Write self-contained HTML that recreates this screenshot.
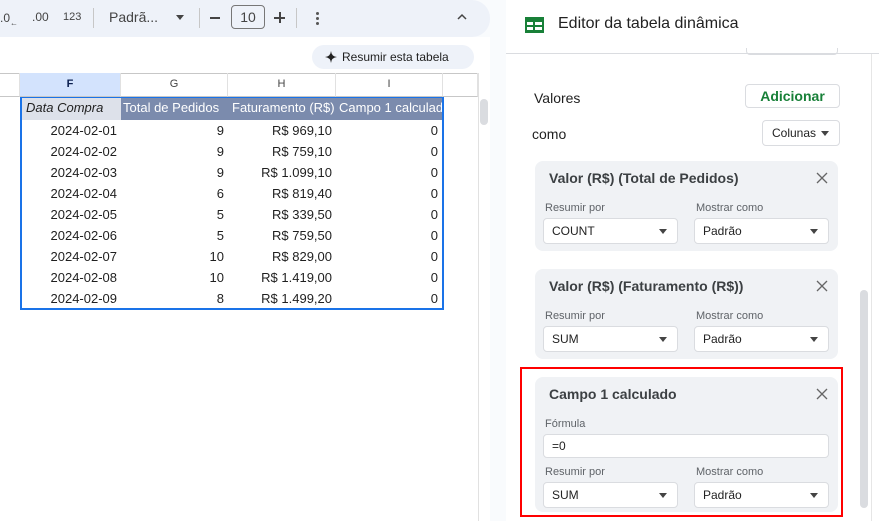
<!DOCTYPE html>
<html><head><meta charset="utf-8"><style>
*{box-sizing:border-box;margin:0;padding:0}
body{width:879px;height:521px;overflow:hidden;background:#f9fbfd;font-family:"Liberation Sans",Arial,sans-serif;position:relative;color:#1f1f1f}
.a{position:absolute}
.tb{left:0;top:0;width:490px;height:37px;background:#eef2f9;border-radius:0 18px 18px 0}
.grid{left:0;top:37px;width:490px;height:484px;background:#fff}
.hdr{top:73px;height:24px;border-bottom:1px solid #c7c7c7;border-right:1px solid #e1e1e1;font-size:11px;color:#444;text-align:center;line-height:23px}
.cell{font-size:13px;height:21px;line-height:21px;padding:0 4px;white-space:nowrap;overflow:hidden}
.r{text-align:right}
.th{background:#7b8bad;color:#fff}
.panel{left:506px;top:0;width:373px;height:521px;background:#fff}
.card{background:#f0f2f5;border-radius:8px;left:535px;width:303px}
.lbl{font-size:11px;color:#5f6368}
.sel{background:#fff;border:1px solid #dadce0;border-radius:4px;height:26px;font-size:12px;line-height:24px;padding-left:8px;color:#222}
.sel:after{content:"";position:absolute;right:10px;top:10px;border:4px solid transparent;border-top:5px solid #444}
.nf:after{display:none}
.t{font-size:14px;font-weight:bold;color:#3c4043}
.dots{width:3px}
.dots i{display:block;width:3px;height:3px;border-radius:50%;background:#555;margin-bottom:2px}
</style></head><body>
<div class="a tb"></div>
<div class="a" style="left:0;top:11px;font-size:12px;color:#444">.0<sub style="font-size:8px">←</sub></div>
<div class="a" style="left:32px;top:10px;font-size:12px;color:#444">.00</div>
<div class="a" style="left:63px;top:11px;font-size:11px;color:#444">123</div>
<div class="a" style="left:93px;top:8px;width:1px;height:20px;background:#c7c7c7"></div>
<div class="a" style="left:109px;top:9px;font-size:14px;color:#444">Padrã...</div>
<div class="a" style="left:176px;top:15px;border:4px solid transparent;border-top:5px solid #444"></div>
<div class="a" style="left:199px;top:8px;width:1px;height:20px;background:#c7c7c7"></div>
<div class="a" style="left:210px;top:17px;width:10px;height:1.5px;background:#444"></div>
<div class="a" style="left:231px;top:5px;width:34px;height:24px;border:1px solid #777;border-radius:4px;font-size:14px;text-align:center;line-height:22px;color:#444">10</div>
<div class="a" style="left:274px;top:17px;width:11px;height:1.5px;background:#444"></div>
<div class="a" style="left:279px;top:12px;width:1.5px;height:11px;background:#444"></div>
<div class="a" style="left:296px;top:8px;width:1px;height:20px;background:#c7c7c7"></div>
<div class="a dots" style="left:316px;top:12px"><i></i><i></i><i></i></div>
<svg class="a" style="left:456px;top:13px" width="12" height="8"><path d="M2 6 L6 2 L10 6" fill="none" stroke="#444" stroke-width="1.5"/></svg>
<div class="a grid"></div>
<div class="a" style="left:312px;top:45px;width:162px;height:24px;background:#eef2f9;border-radius:12px;font-size:12px;line-height:24px;padding-left:30px">Resumir esta tabela</div>
<svg class="a" style="left:324px;top:50px" width="14" height="14"><path d="M7 1 Q7.5 6.5 13 7 Q7.5 7.5 7 13 Q6.5 7.5 1 7 Q6.5 6.5 7 1Z" fill="#222"/></svg>
<div class="a" style="left:0;top:73px;width:478px;height:1px;background:#c7c7c7"></div>
<div class="a hdr" style="left:0;width:20px"></div>
<div class="a hdr" style="left:20px;width:101px;background:#d3e3fd;font-weight:bold;color:#0b1f4f">F</div>
<div class="a hdr" style="left:121px;width:107px">G</div>
<div class="a hdr" style="left:228px;width:108px">H</div>
<div class="a hdr" style="left:336px;width:107px">I</div>
<div class="a hdr" style="left:443px;width:35px"></div>
<div class="a" style="left:478px;top:73px;width:1px;height:448px;background:#e1e1e1"></div>
<div class="a" style="left:480px;top:99px;width:8px;height:26px;background:#dadce0;border-radius:4px"></div>
<div class="a" style="left:20px;top:97px;width:424px;height:213px;border:2px solid #1a73e8"></div>
<div class="a" style="left:22px;top:98px;width:420px">
<div style="display:flex"><div class="cell" style="width:99px;height:22px;line-height:20px;background:#dde1ea;font-style:italic;color:#222">Data Compra</div><div class="cell th" style="width:107px;height:22px;line-height:20px;padding:0 2px">Total de Pedidos</div><div class="cell th" style="width:108px;height:22px;line-height:20px;padding:0 4px">Faturamento (R$)</div><div class="cell th" style="width:106px;height:22px;line-height:20px;padding:0 3px">Campo 1 calculado</div></div>
<div style="font-size:13px">
<div style="display:flex"><div class="cell r" style="width:99px">2024-02-01</div><div class="cell r" style="width:107px">9</div><div class="cell r" style="width:108px">R$ 969,10</div><div class="cell r" style="width:106px">0</div></div>
<div style="display:flex"><div class="cell r" style="width:99px">2024-02-02</div><div class="cell r" style="width:107px">9</div><div class="cell r" style="width:108px">R$ 759,10</div><div class="cell r" style="width:106px">0</div></div>
<div style="display:flex"><div class="cell r" style="width:99px">2024-02-03</div><div class="cell r" style="width:107px">9</div><div class="cell r" style="width:108px">R$ 1.099,10</div><div class="cell r" style="width:106px">0</div></div>
<div style="display:flex"><div class="cell r" style="width:99px">2024-02-04</div><div class="cell r" style="width:107px">6</div><div class="cell r" style="width:108px">R$ 819,40</div><div class="cell r" style="width:106px">0</div></div>
<div style="display:flex"><div class="cell r" style="width:99px">2024-02-05</div><div class="cell r" style="width:107px">5</div><div class="cell r" style="width:108px">R$ 339,50</div><div class="cell r" style="width:106px">0</div></div>
<div style="display:flex"><div class="cell r" style="width:99px">2024-02-06</div><div class="cell r" style="width:107px">5</div><div class="cell r" style="width:108px">R$ 759,50</div><div class="cell r" style="width:106px">0</div></div>
<div style="display:flex"><div class="cell r" style="width:99px">2024-02-07</div><div class="cell r" style="width:107px">10</div><div class="cell r" style="width:108px">R$ 829,00</div><div class="cell r" style="width:106px">0</div></div>
<div style="display:flex"><div class="cell r" style="width:99px">2024-02-08</div><div class="cell r" style="width:107px">10</div><div class="cell r" style="width:108px">R$ 1.419,00</div><div class="cell r" style="width:106px">0</div></div>
<div style="display:flex"><div class="cell r" style="width:99px">2024-02-09</div><div class="cell r" style="width:107px">8</div><div class="cell r" style="width:108px">R$ 1.499,20</div><div class="cell r" style="width:106px">0</div></div>
</div></div>
<div class="a dots" style="left:509px;top:260px"><i style="background:#777"></i><i style="background:#777"></i><i style="background:#777"></i></div>
<div class="a panel"></div>
<div class="a" style="left:506px;top:53px;width:373px;height:1px;background:#dadce0"></div>
<svg class="a" style="left:525px;top:17px" width="19" height="16"><rect width="19" height="16" fill="#188038"/><g fill="#fff"><rect x="2" y="5" width="6" height="3"/><rect x="10" y="5" width="7" height="3"/><rect x="2" y="10" width="6" height="3"/><rect x="10" y="10" width="7" height="3"/></g></svg>
<div class="a" style="left:558px;top:15px;font-size:16px;color:#222">Editor da tabela dinâmica</div>
<div class="a" style="left:746px;top:48px;width:92px;height:7px;border:1px solid #dadce0;border-top:none;border-radius:0 0 4px 4px"></div>
<div class="a" style="left:871px;top:54px;width:1px;height:467px;background:#e6e6e6"></div>
<div class="a" style="left:860px;top:290px;width:8px;height:218px;background:#dadce0;border-radius:4px"></div>
<div class="a" style="left:534px;top:90px;font-size:14px">Valores</div>
<div class="a" style="left:745px;top:84px;width:95px;height:24px;border:1px solid #dadce0;border-radius:4px;color:#188038;font-weight:bold;font-size:14px;text-align:center;line-height:22px">Adicionar</div>
<div class="a" style="left:532px;top:126px;font-size:14px">como</div>
<div class="a sel" style="left:762px;top:120px;width:78px;height:26px;font-size:12px;padding-left:9px">Colunas</div>

<div class="a card" style="top:161px;height:90px"></div>
<div class="a t" style="left:549px;top:170px">Valor (R$) (Total de Pedidos)</div>
<svg class="a" style="left:816px;top:172px" width="12" height="12"><path d="M1 1L11 11M11 1L1 11" stroke="#666" stroke-width="1.3"/></svg>
<div class="a lbl" style="left:545px;top:202px">Resumir por</div>
<div class="a lbl" style="left:696px;top:202px">Mostrar como</div>
<div class="a sel" style="left:543px;top:218px;width:135px">COUNT</div>
<div class="a sel" style="left:694px;top:218px;width:135px">Padrão</div>

<div class="a card" style="top:269px;height:90px"></div>
<div class="a t" style="left:549px;top:278px">Valor (R$) (Faturamento (R$))</div>
<svg class="a" style="left:816px;top:280px" width="12" height="12"><path d="M1 1L11 11M11 1L1 11" stroke="#666" stroke-width="1.3"/></svg>
<div class="a lbl" style="left:545px;top:310px">Resumir por</div>
<div class="a lbl" style="left:696px;top:310px">Mostrar como</div>
<div class="a sel" style="left:543px;top:326px;width:135px">SUM</div>
<div class="a sel" style="left:694px;top:326px;width:135px">Padrão</div>

<div class="a card" style="top:377px;height:135px"></div>
<div class="a" style="left:520px;top:367px;width:323px;height:150px;border:2px solid #f00"></div>
<div class="a t" style="left:549px;top:386px">Campo 1 calculado</div>
<svg class="a" style="left:816px;top:388px" width="12" height="12"><path d="M1 1L11 11M11 1L1 11" stroke="#666" stroke-width="1.3"/></svg>
<div class="a lbl" style="left:545px;top:418px">Fórmula</div>
<div class="a sel nf" style="left:543px;top:434px;width:286px;height:24px;line-height:22px">=0</div>
<div class="a lbl" style="left:545px;top:466px">Resumir por</div>
<div class="a lbl" style="left:696px;top:466px">Mostrar como</div>
<div class="a sel" style="left:543px;top:482px;width:135px">SUM</div>
<div class="a sel" style="left:694px;top:482px;width:135px">Padrão</div>
</body></html>
